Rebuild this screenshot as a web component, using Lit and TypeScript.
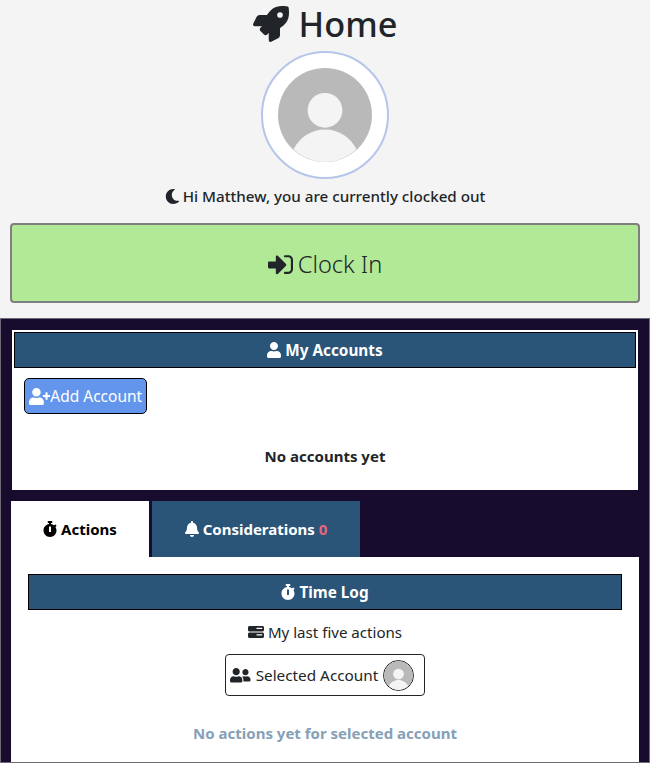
import { LitElement, html, css, svg } from "lit";
import { customElement } from "lit/decorators.js";

const P: Record<string, [number, string]> = {
  rocket: [512, "M505.12 19.09c-1.19-5.53-6.66-11-12.21-12.19C460.72 0 435.51 0 410.41 0 307.18 0 245.27 55.2 199.05 128H94.84c-16.35.02-35.56 11.88-42.89 26.48L2.52 253.3A28.4 28.4 0 0 0 0 264a24.01 24.01 0 0 0 24.01 24h103.81l-22.47 22.47c-11.37 11.36-13 32.26 0 45.25l50.9 50.9c11.16 11.19 32.16 13.16 45.28 0l22.47-22.47V488a24.01 24.01 0 0 0 24.01 24 28.56 28.56 0 0 0 10.71-2.52l98.73-49.39c14.63-7.3 26.51-26.5 26.51-42.86V312.8c72.6-46.31 128.03-108.41 128.03-211.1.04-25.2.04-50.4-6.91-82.61zM384.04 168a40 40 0 1 1 40.01-40 40.02 40.02 0 0 1-40.01 40z"],
  moon: [512, "M283.211 512c78.962 0 151.079-35.925 198.857-94.792 7.068-8.708-.639-21.43-11.562-19.35-124.203 23.654-238.262-71.576-238.262-196.954 0-72.222 38.662-138.635 101.498-174.394 9.686-5.512 7.25-20.197-3.756-22.23A258.156 258.156 0 0 0 283.211 0c-141.309 0-256 114.511-256 256 0 141.309 114.511 256 256 256z"],
  signin: [512, "M416 448h-76c-6.6 0-12-5.4-12-12v-20c0-6.6 5.4-12 12-12h76c30 0 52-22 52-52V160c0-30-22-52-52-52h-76c-6.6 0-12-5.4-12-12V76c0-6.600 5.4-12 12-12h76c53 0 96 43 96 96v192c0 53-43 96-96 96zm-47-201L201 79c-15-15-41-4.5-41 17v96H24c-13.3 0-24 10.7-24 24v96c0 13.3 10.700 24 24 24h136v96c0 21.5 26 32 41 17l168-168c9.3-9.4 9.3-24.6 0-34z"],
  user: [448, "M224 256c70.7 0 128-57.3 128-128S294.7 0 224 0 96 57.3 96 128s57.3 128 128 128zm89.6 32h-16.7c-22.2 10.2-46.9 16-72.9 16s-50.6-5.8-72.9-16h-16.7C60.2 288 0 348.2 0 422.4V464c0 26.5 21.5 48 48 48h352c26.5 0 48-21.5 48-48v-41.6c0-74.2-60.2-134.4-134.4-134.4z"],
  userplus: [640, "M624 208h-64v-64c0-8.8-7.2-16-16-16h-32c-8.8 0-16 7.2-16 16v64h-64c-8.8 0-16 7.2-16 16v32c0 8.8 7.2 16 16 16h64v64c0 8.8 7.2 16 16 16h32c8.8 0 16-7.2 16-16v-64h64c8.8 0 16-7.2 16-16v-32c0-8.8-7.2-16-16-16zm-400 48c70.7 0 128-57.3 128-128S294.7 0 224 0 96 57.3 96 128s57.3 128 128 128zm89.6 32h-16.7c-22.2 10.2-46.9 16-72.9 16s-50.6-5.8-72.9-16h-16.7C60.2 288 0 348.2 0 422.4V464c0 26.5 21.5 48 48 48h352c26.5 0 48-21.5 48-48v-41.6c0-74.2-60.2-134.4-134.4-134.4z"],
  stopwatch: [448, "M432 304c0 114.9-93.1 208-208 208S16 418.9 16 304c0-104 76.3-190.2 176-205.5V64h-28c-6.6 0-12-5.4-12-12V12c0-6.6 5.4-12 12-12h120c6.6 0 12 5.4 12 12v40c0 6.6-5.4 12-12 12h-28v34.5c37.5 5.8 71.7 21.6 99.7 44.6l27.5-27.5c4.7-4.7 12.3-4.7 17 0l28.3 28.3c4.7 4.7 4.7 12.3 0 17l-29.4 29.4-.6.6C419.7 223.3 432 262.2 432 304zm-176 36V188.5c0-6.6-5.4-12-12-12h-40c-6.6 0-12 5.4-12 12V340c0 6.6 5.4 12 12 12h40c6.6 0 12-5.4 12-12z"],
  bell: [448, "M224 512c35.32 0 63.97-28.65 63.97-64H160.03c0 35.35 28.65 64 63.97 64zm215.39-149.71c-19.32-20.76-55.47-51.99-55.47-154.29 0-77.7-54.48-139.9-127.94-155.16V32c0-17.67-14.32-32-31.98-32s-31.98 14.33-31.98 32v20.84C118.56 68.1 64.08 130.3 64.08 208c0 102.3-36.15 133.53-55.47 154.29-6 6.45-8.66 14.16-8.61 21.71.11 16.4 12.98 32 32.1 32h383.8c19.12 0 32-15.6 32.1-32 .05-7.55-2.61-15.27-8.61-21.71z"],
  server: [512, "M48 64C21.500 64 0 85.500 0 112v80c0 26.500 21.500 48 48 48h416c26.500 0 48-21.500 48-48v-80c0-26.500-21.500-48-48-48H48zm240 56h152c11 0 20 9 20 20s-9 20-20 20H288c-11 0-20-9-20-20s9-20 20-20zM48 272c-26.500 0-48 21.500-48 48v80c0 26.500 21.500 48 48 48h416c26.500 0 48-21.500 48-48v-80c0-26.500-21.500-48-48-48H48zm240 56h152c11 0 20 9 20 20s-9 20-20 20H288c-11 0-20-9-20-20s9-20 20-20z"],
  friends: [640, "M192 256c61.9 0 112-50.1 112-112S253.9 32 192 32 80 82.1 80 144s50.1 112 112 112zm76.8 32h-8.3c-20.8 10-43.9 16-68.5 16s-47.6-6-68.5-16h-8.3C51.6 288 0 339.6 0 403.2V432c0 26.5 21.5 48 48 48h288c26.5 0 48-21.5 48-48v-28.8c0-63.6-51.6-115.2-115.2-115.2zM480 256c53 0 96-43 96-96s-43-96-96-96-96 43-96 96 43 96 96 96zm48 32h-3.8c-13.9 4.8-28.6 8-44.2 8s-30.3-3.2-44.2-8H432c-20.4 0-39.2 5.9-55.7 15.4 24.4 26.3 39.7 61.2 39.7 99.8v38.4c0 2.2-.5 4.3-.6 6.4H592c26.5 0 48-21.5 48-48 0-61.9-50.1-112-112-112z"],
};

const icon = (n: string, h: number) => {
  const [w, d] = P[n];
  return html`<svg class="ic" viewBox="0 0 ${w} 512" height=${h} width=${(h * w) / 512} fill="currentColor">${svg`<path d=${d}></path>`}</svg>`;
};

const avatar = () => html`<svg class="avimg" viewBox="0 0 100 100">
  <circle cx="50" cy="50" r="50" fill="#b9b9b9"></circle>
  <circle cx="50" cy="45" r="18.5" fill="#f4f4f4"></circle>
  <path d="M16.500 86.500C23 74 35 65.500 50 65.500s27 8.500 33.500 21C74 95.500 62 100 50 100S26 95.500 16.500 86.500z" fill="#f4f4f4"></path>
</svg>`;

@customElement("app-root")
export class AppRoot extends LitElement {
  static styles = css`
    :host {
      display: block;
      height: 763px;
      overflow: hidden;
      background: #f4f4f4;
      color: #212529;
      font-family: "Noto Sans", "Open Sans", sans-serif;
      font-size: 16px;
    }
    .ic { display: inline-block; flex: none; }
    .title {
      display: flex; justify-content: center; align-items: center; gap: 10px;
      height: 47px; font-size: 34.3px; font-weight: 500; line-height: 47px; margin: 0;
    }
    .hero { display: flex; justify-content: center; padding-top: 4px; }
    .ring {
      box-sizing: border-box; width: 128px; height: 128px; border-radius: 50%;
      border: 2px solid #b6c5ea; background: #fff; padding: 15px; display: flex;
    }
    .avimg { width: 100%; height: 100%; display: block; }
    .status {
      display: flex; justify-content: center; align-items: center; gap: 3px;
      height: 24px; margin-top: 5px; font-size: 15.2px; font-weight: 500; line-height: 24px;
    }
    .clock {
      box-sizing: border-box; display: flex; justify-content: center; align-items: center; gap: 5px;
      height: 80px; margin: 15px 10px 15px; width: 630px; background: #b2e996; padding: 2px 0 0;
      border: 2px solid #7f7f7f; border-radius: 4px; font-size: 23.6px; font-weight: 300; color: #212529; font-family: inherit;
    }
    .panel {
      box-sizing: border-box; height: 445px; overflow: hidden; background: #170b2e;
      border: 1px solid #6d6a75; padding: 11px 10px 0 10px;
    }
    .card { background: #fff; height: 160px; margin: 0 1px; box-sizing: border-box; padding: 2px; }
    .bar {
      box-sizing: border-box; height: 36px; background: #2a5578; border: 1px solid #000; color: #fff;
      display: flex; justify-content: center; align-items: center; gap: 4px;
      font-weight: 700; font-size: 15.3px;
    }
    .add {
      box-sizing: border-box; display: inline-flex; align-items: center; height: 36px; width: 123px;
      margin: 10px 0 0 10px; padding: 0 0 0 4px; background: #6495ed; border: 1px solid #000; border-radius: 5px;
      color: #fff; font-size: 15.5px; font-family: inherit; white-space: nowrap;
    }
    .empty { text-align: center; font-weight: 700; font-size: 15px; line-height: 24px; margin-top: 30px; color: #212529; }
    .tabs { display: flex; gap: 3px; margin-top: 11px; height: 56px; }
    .tab {
      box-sizing: border-box; display: flex; justify-content: center; align-items: center; gap: 4px;
      font-weight: 700; font-size: 15px; height: 56px;
    }
    .tab.on { width: 138px; background: #fff; color: #000; }
    .tab.off { width: 208px; background: #2a5578; color: #fff; }
    .count { color: #e8647c; }
    .body { background: #fff; height: 206px; padding: 17px 17px 0; margin-right: 0; }
    .sub {
      display: flex; justify-content: center; align-items: center; gap: 4px;
      height: 24px; margin-top: 10px; font-size: 15.1px; line-height: 24px;
    }
    .selwrap { display: flex; justify-content: center; margin-top: 10px; }
    .sel {
      box-sizing: border-box; display: flex; align-items: center; gap: 5px; width: 200px; height: 42px;
      padding: 0 4px; border: 1px solid #212529; border-radius: 4px; font-size: 15.3px; white-space: nowrap;
    }
    .mini { box-sizing: border-box; width: 31px; height: 31px; border-radius: 50%; border: 1px solid #212529; display: flex; overflow: hidden; flex: none; }
    .none { text-align: center; font-weight: 700; font-size: 15px; line-height: 24px; margin-top: 25px; color: #86a0b7; }
  `;

  render() {
    return html`
      <h1 class="title">${icon("rocket", 36)}<span>Home</span></h1>
      <div class="hero"><div class="ring">${avatar()}</div></div>
      <div class="status">${icon("moon", 15)}<span>Hi Matthew, you are currently clocked out</span></div>
      <button class="clock">${icon("signin", 25)}<span>Clock In</span></button>
      <div class="panel">
        <div class="card">
          <div class="bar">${icon("user", 16)}<span>My Accounts</span></div>
          <button class="add">${icon("userplus", 17)}<span>Add Account</span></button>
          <div class="empty">No accounts yet</div>
        </div>
        <div class="tabs">
          <div class="tab on">${icon("stopwatch", 16)}<span>Actions</span></div>
          <div class="tab off">${icon("bell", 16)}<span>Considerations <span class="count">0</span></span></div>
        </div>
        <div class="body">
          <div class="bar">${icon("stopwatch", 16)}<span>Time Log</span></div>
          <div class="sub">${icon("server", 16)}<span>My last five actions</span></div>
          <div class="selwrap"><div class="sel">${icon("friends", 16.5)}<span>Selected Account</span><span class="mini">${avatar()}</span></div></div>
          <div class="none">No actions yet for selected account</div>
        </div>
      </div>
    `;
  }
}
